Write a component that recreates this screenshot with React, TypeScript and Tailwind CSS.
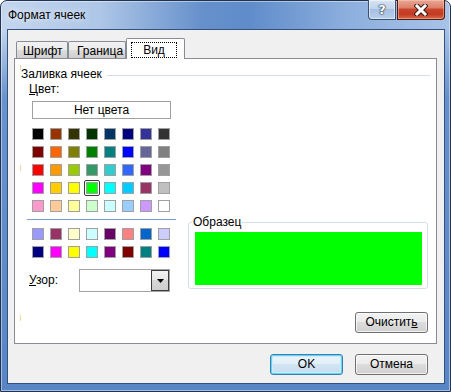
import React from "react";

const palette: string[][] = [
  ["bg-[#000000]", "bg-[#993300]", "bg-[#333300]", "bg-[#003300]", "bg-[#003366]", "bg-[#000080]", "bg-[#333399]", "bg-[#333333]"],
  ["bg-[#800000]", "bg-[#ff6600]", "bg-[#808000]", "bg-[#008000]", "bg-[#008080]", "bg-[#0000ff]", "bg-[#666699]", "bg-[#808080]"],
  ["bg-[#ff0000]", "bg-[#ff9900]", "bg-[#99cc00]", "bg-[#339966]", "bg-[#33cccc]", "bg-[#3366ff]", "bg-[#800080]", "bg-[#969696]"],
  ["bg-[#ff00ff]", "bg-[#ffcc00]", "bg-[#ffff00]", "bg-[#00ff00]", "bg-[#00ffff]", "bg-[#00ccff]", "bg-[#993366]", "bg-[#c0c0c0]"],
  ["bg-[#ff99cc]", "bg-[#ffcc99]", "bg-[#ffff99]", "bg-[#ccffcc]", "bg-[#ccffff]", "bg-[#99ccff]", "bg-[#cc99ff]", "bg-[#ffffff]"],
];

const chart: string[][] = [
  ["bg-[#9999ff]", "bg-[#993366]", "bg-[#ffffcc]", "bg-[#ccffff]", "bg-[#660066]", "bg-[#ff8080]", "bg-[#0066cc]", "bg-[#ccccff]"],
  ["bg-[#000080]", "bg-[#ff00ff]", "bg-[#ffff00]", "bg-[#00ffff]", "bg-[#800080]", "bg-[#800000]", "bg-[#008080]", "bg-[#0000ff]"],
];

function Swatch({ cls, selected }: { cls: string; selected?: boolean }) {
  return (
    <div className="relative w-[12px] h-[12px]">
      {selected && <div className="absolute -inset-[2px] rounded-[2px] border border-[#3a3a3a]" />}
      <div className={`w-full h-full border border-[#a0a0a0] ${cls}`} />
    </div>
  );
}

function Btn({ children, def }: { children: React.ReactNode; def?: boolean }) {
  return (
    <div
      className={
        def
          ? "w-[73px] h-[21px] rounded-[3px] border border-[#3c7fb1] bg-[linear-gradient(#eaf4fb_0%,#e2eef8_50%,#d3e4f2_50%,#c6dcee_100%)] shadow-[inset_0_0_0_1px_#62d2f6,inset_0_0_0_2px_#c6eefb] flex items-center justify-center text-black"
          : "w-[73px] h-[21px] rounded-[3px] border border-[#707070] bg-[linear-gradient(#f2f2f2_0%,#ebebeb_50%,#dddddd_50%,#cfcfcf_100%)] shadow-[inset_0_0_0_1px_rgba(255,255,255,0.7)] flex items-center justify-center text-black"
      }
    >
      {children}
    </div>
  );
}

export default function App() {
  return (
    <div className="w-[451px] h-[392px] relative flex flex-col rounded-t-[7px] border border-[#22334f] bg-[linear-gradient(to_bottom,rgba(88,135,200,0)_0%,rgba(88,135,200,0)_7%,rgba(88,135,200,0.85)_25%,#5885c6_100%),linear-gradient(to_right,#c4d6ee_0%,#aec6e7_22%,#6590cb_45%,#5f8cca_55%,#8eb0de_78%,#a8c3e7_100%)] shadow-[inset_0_0_0_1px_rgba(255,255,255,0.45)] font-['Liberation_Sans',Arial,sans-serif] text-[12px] text-black leading-[15px]">
      {/* Title bar */}
      <div className="h-[28px] flex items-center pl-[7px] [text-shadow:0_0_6px_rgba(255,255,255,0.95)]">
        Формат ячеек
      </div>

      {/* Caption buttons */}
      <div className="absolute left-[367px] top-[-1px] w-[28px] h-[20px] rounded-bl-[4px] border border-[#3b5170] border-t-0 bg-[linear-gradient(#d6e3f3_0%,#c3d5ec_45%,#a7c0e2_50%,#b9cfeb_100%)] shadow-[inset_0_0_0_1px_rgba(255,255,255,0.5)] flex items-center justify-center">
        <span className="font-['DejaVu_Sans',sans-serif] font-bold text-[13px] leading-none text-white [text-shadow:0_0_1px_#1c2c44,0_0_1px_#1c2c44,0_0_2px_#1c2c44]">?</span>
      </div>
      <div className="absolute left-[396px] top-[-1px] w-[48px] h-[20px] rounded-br-[4px] border border-[#4a1c12] border-t-0 bg-[linear-gradient(#eaa898_0%,#dc8068_40%,#c9452c_50%,#c23a22_75%,#d86a4c_100%)] shadow-[inset_0_0_0_1px_rgba(255,210,190,0.45)] flex items-center justify-center">
        <svg width="14" height="12" viewBox="0 0 14 12">
          <path d="M3 2 L11 10 M11 2 L3 10" stroke="#3a1a12" strokeWidth="5" strokeLinecap="square" />
          <path d="M3 2 L11 10 M11 2 L3 10" stroke="#ffffff" strokeWidth="3" strokeLinecap="square" />
        </svg>
      </div>

      {/* Client area */}
      <div className="ml-[6px] mr-[5px] mb-[7px] h-[355px] border border-[#34507c] bg-[#f0f0f0] flex flex-col pt-[8px] pl-[6px]">
        {/* Tabs */}
        <div className="h-[20px] flex items-end pl-[2px]">
          <div className="w-[52px] h-[17px] border border-b-0 border-[#898c95] rounded-t-[2px] bg-[linear-gradient(#f2f2f2_0%,#ebebeb_50%,#dddddd_50%,#cfcfcf_100%)] pl-[6px] pt-[2px]">
            Шрифт
          </div>
          <div className="w-[58px] h-[17px] border border-b-0 border-[#898c95] rounded-t-[2px] bg-[linear-gradient(#f2f2f2_0%,#ebebeb_50%,#dddddd_50%,#cfcfcf_100%)] pl-[8px] pt-[2px]">
            Граница
          </div>
          <div className="relative z-10 -mb-px w-[59px] h-[21px] border border-b-0 border-[#898c95] rounded-t-[2px] bg-white pl-[4px] pt-[3px]">
            <div className="w-[46px] h-[16px] border border-dotted border-black flex items-center justify-center">Вид</div>
          </div>
        </div>

        {/* Panel */}
        <div className="relative w-[423px] h-[286px] border border-[#898c95] bg-white flex flex-col">
          <div className="absolute left-[5px] top-[6px] w-px h-[5px] bg-[#f3d7a4]" />
          <div className="absolute left-[5px] top-[106px] w-px h-[6px] bg-[#f3d7a4]" />
          <div className="absolute left-[5px] top-[256px] w-px h-[6px] bg-[#f3d7a4]" />

          <div className="h-[23px] pt-[8px] pl-[6px] pr-[6px] flex items-center">
            <span>Заливка ячеек</span>
            <div className="flex-1 ml-[5px] mt-[2px] h-px bg-[#d5dfe5]" />
          </div>

          <div className="flex">
            {/* Left column */}
            <div className="w-[173px] pl-[6px] flex flex-col">
              <div className="ml-[8px]">
                <u>Ц</u>вет:
              </div>
              <div className="mt-[4px] ml-[11px] w-[139px] h-[18px] border border-[#a0a0a0] flex items-center justify-center">
                Нет цвета
              </div>
              <div className="mt-[9px] ml-[11px] grid grid-cols-[repeat(8,12px)] gap-[6px]">
                {palette.map((row, r) =>
                  row.map((c, i) => <Swatch key={`${r}-${i}`} cls={c} selected={r === 3 && i === 3} />)
                )}
              </div>
              <div className="mt-[7px] ml-[6px] w-[149px] h-px bg-[#7f9ed6]" />
              <div className="mt-[8px] ml-[11px] grid grid-cols-[repeat(8,12px)] gap-[6px]">
                {chart.map((row, r) => row.map((c, i) => <Swatch key={`c${r}-${i}`} cls={c} />))}
              </div>
              <div className="mt-[11px] ml-[8px] flex items-center">
                <div className="w-[50px]">
                  <u>У</u>зор:
                </div>
                <div className="w-[91px] h-[23px] border border-[#a5a5a5] bg-white flex justify-end">
                  <div className="w-[18px] h-full border border-[#3c3c3c] bg-[linear-gradient(#f2f2f2_0%,#e6e6e6_50%,#d6d6d6_50%,#cfcfcf_100%)] flex items-center justify-center">
                    <svg width="7" height="4" viewBox="0 0 7 4">
                      <path d="M0 0 H7 L3.5 4 Z" fill="#000" />
                    </svg>
                  </div>
                </div>
              </div>
            </div>

            {/* Right column */}
            <div className="w-[240px] flex flex-col items-end">
              <div className="relative mt-[140px] w-[240px] h-[67px] rounded-[3px] border border-[#d5dfe5] pt-[9px] pl-[6px]">
                <span className="absolute left-[3px] -top-[8px] bg-white px-px">Образец</span>
                <div className="w-[227px] h-[53px] bg-[#00ff00]" />
              </div>
              <div className="mt-[23px]">
                <Btn>
                  Очистит<u>ь</u>
                </Btn>
              </div>
            </div>
          </div>
        </div>

        {/* Bottom buttons */}
        <div className="mt-[10px] pr-[16px] flex justify-end gap-[12px]">
          <Btn def>OK</Btn>
          <Btn>Отмена</Btn>
        </div>
      </div>
    </div>
  );
}
